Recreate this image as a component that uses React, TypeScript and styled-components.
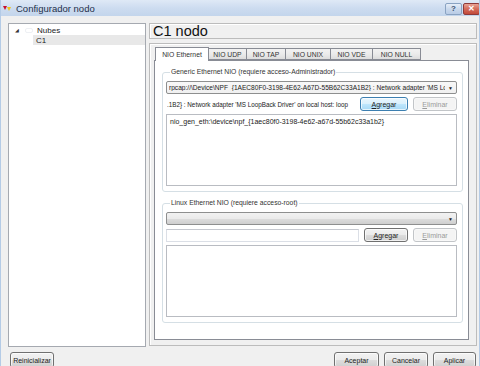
import React from 'react';
import styled, { createGlobalStyle } from 'styled-components';

const Global = createGlobalStyle`
  html, body { margin: 0; padding: 0; background: #f0f0f0; }
  body { font-family: "Liberation Sans", Arial, sans-serif; font-size: 7px; color: #1a1a1a; }
  * { box-sizing: border-box; }
`;

const Window = styled.div`
  width: 480px;
  height: 366px;
  overflow: hidden;
  display: flex;
  flex-direction: column;
  background: #f0f0f0;
  border-left: 1px solid #b4cbe6;
  border-right: 1px solid #b4cbe6;
`;

const TitleBar = styled.div`
  height: 16px;
  flex: none;
  display: flex;
  align-items: center;
  padding: 0 0 0 2px;
  background: linear-gradient(180deg, #dfe9f6 0%, #cddcf0 50%, #c3d5ec 100%);
`;

const TitleText = styled.span`
  margin-left: 5px;
  font-size: 9.5px;
  color: #1e2f4a;
  flex: 1;
`;

const CaptionGroup = styled.div`
  display: flex;
  gap: 1px;
  align-self: flex-start;
  margin-right: -1px;
`;

const CaptionButton = styled.div<{ $close?: boolean }>`
  width: 17px;
  height: 12px;
  margin-top: 3px;
  display: flex;
  align-items: center;
  justify-content: center;
  border: 1px solid ${p => (p.$close ? '#8d3a3a' : '#8aa3c2')};
  border-radius: 2px;
  background: ${p =>
    p.$close
      ? 'linear-gradient(180deg,#e8a293 0%,#d46a5a 50%,#c24a3a 100%)'
      : 'linear-gradient(180deg,#e6eef8 0%,#c9d8ec 50%,#b9cce6 100%)'};
  color: ${p => (p.$close ? '#fff' : '#3a5270')};
  font-size: 8px;
  font-weight: bold;
  line-height: 1;
`;

const Body = styled.div`
  flex: 1;
  display: flex;
  flex-direction: column;
  padding: 7px 2px 0 7px;
  min-width: 0;
`;

const MainRow = styled.div`
  display: flex;
  gap: 3px;
  height: 324px;
  flex: none;
  min-width: 0;
`;

const TreePanel = styled.div`
  width: 138px;
  flex: none;
  background: #fff;
  border: 1px solid #a5a9b0;
  padding-top: 1px;
`;

const TreeRow = styled.div<{ $indent: number; $selected?: boolean }>`
  height: 10px;
  display: flex;
  align-items: center;
  margin-left: ${p => p.$indent}px;
  background: ${p => (p.$selected ? '#e8e8e8' : 'transparent')};
  padding-left: ${p => (p.$selected ? 3 : 0)}px;
  font-size: 8px;
  color: #222;
`;

const Expander = styled.span`
  width: 10px;
  font-size: 5px;
  color: #333;
`;

const NodeIcon = styled.span`
  width: 8px;
  height: 5px;
  margin-right: 4px;
  border: 1px solid #eef0f4;
  border-radius: 2px;
`;

const RightCol = styled.div`
  flex: 1;
  min-width: 0;
  display: flex;
  flex-direction: column;
  gap: 4px;
`;

const HeaderBox = styled.div`
  height: 16px;
  border: 1px solid #bcbcbc;
  box-shadow: inset 1px 1px 0 #fff;
  padding-left: 3px;
  display: flex;
  align-items: center;
  font-size: 14.5px;
  color: #111;
`;

const OuterFrame = styled.div`
  height: 303px;
  min-width: 0;
  border: 1px solid #bcbcbc;
  box-shadow: inset 1px 1px 0 #fff;
  padding: 4px 7px 5px 4px;
  display: flex;
  flex-direction: column;
`;

const TabBar = styled.div`
  display: flex;
  height: 12px;
  padding-left: 1px;
  position: relative;
  z-index: 1;
  flex: none;
`;

const Tab = styled.div<{ $w: number; $active?: boolean }>`
  width: ${p => p.$w}px;
  height: ${p => (p.$active ? 14 : 12)}px;
  margin-top: ${p => (p.$active ? -1 : 0)}px;
  margin-left: -1px;
  border: 1px solid #898c95;
  border-bottom: ${p => (p.$active ? 'none' : '1px solid #898c95')};
  background: ${p =>
    p.$active ? '#fff' : 'linear-gradient(180deg,#f2f2f2 0%,#ebebeb 50%,#dddddd 100%)'};
  display: flex;
  align-items: center;
  justify-content: center;
  font-size: 6.8px;
  color: #333;
  &:first-child { margin-left: 0; }
`;

const TabPane = styled.div`
  flex: 1;
  min-width: 0;
  background: #fff;
  border: 1px solid #898c95;
  padding: 6px 5px 0 7px;
  display: flex;
  flex-direction: column;
  gap: 6px;
`;

const Group = styled.fieldset`
  margin: 0;
  min-width: 0;
  border: 1px solid #d5dfe5;
  border-radius: 3px;
  padding: 4px 5px 5px 3px;
  display: flex;
  flex-direction: column;
  gap: 3px;
`;

const Legend = styled.legend`
  padding: 0 1px;
  margin-left: 4px;
  font-size: 6.8px;
  line-height: 10px;
  color: #333;
`;

const Combo = styled.div<{ $light?: boolean }>`
  height: 13px;
  min-width: 0;
  border: 1px solid #8e8f8f;
  border-radius: 2px;
  background: ${p =>
    p.$light
      ? 'linear-gradient(180deg,#f8f8f8 0%,#f0f0f0 100%)'
      : 'linear-gradient(180deg,#f2f2f2 0%,#ebebeb 50%,#dddddd 51%,#cfcfcf 100%)'};
  display: flex;
  align-items: center;
  padding: 0 3px 0 2px;
  font-size: 6.6px;
  color: #222;
  overflow: hidden;
  white-space: nowrap;
`;

const ComboText = styled.span`
  flex: 1;
  width: 0;
  min-width: 0;
  overflow: hidden;
`;

const ComboArrow = styled.span`
  font-size: 5px;
  color: #222;
  margin-left: 3px;
`;

const Row = styled.div`
  display: flex;
  align-items: center;
  height: 14px;
  gap: 5px;
  min-width: 0;
`;

const TextField = styled.div<{ $bare?: boolean }>`
  flex: 1;
  width: 0;
  min-width: 0;
  height: 13px;
  border: 1px solid ${p => (p.$bare ? 'transparent' : '#dbdfe6')};
  border-top-color: ${p => (p.$bare ? 'transparent' : '#c5c8cf')};
  background: #fff;
  display: flex;
  align-items: center;
  padding: 0 2px 0 0;
  font-size: 6.3px;
  color: #222;
  overflow: hidden;
  white-space: nowrap;
`;

const Button = styled.div<{ $w: number; $variant?: 'default' | 'hot' | 'disabled'; $h?: number }>`
  width: ${p => p.$w}px;
  height: ${p => p.$h ?? 14}px;
  flex: none;
  border: 1px solid
    ${p => (p.$variant === 'hot' ? '#3c7fb1' : p.$variant === 'disabled' ? '#c2c5c8' : '#707070')};
  border-radius: 3px;
  background: ${p =>
    p.$variant === 'hot'
      ? 'linear-gradient(180deg,#eaf6fd 0%,#d9f0fc 50%,#bee6fd 51%,#a7d9f5 100%)'
      : p.$variant === 'disabled'
      ? '#f4f4f4'
      : 'linear-gradient(180deg,#f2f2f2 0%,#ebebeb 50%,#dddddd 51%,#cfcfcf 100%)'};
  box-shadow: inset 0 0 0 1px ${p => (p.$variant === 'disabled' ? '#f8f8f8' : 'rgba(255,255,255,0.7)')};
  display: flex;
  align-items: center;
  justify-content: center;
  font-size: 7px;
  color: ${p => (p.$variant === 'disabled' ? '#9a9a9a' : '#222')};
  & u { text-decoration: underline; }
`;

const ListBox = styled.div`
  height: 72px;
  min-width: 0;
  border: 1px solid #b9bcc2;
  background: #fff;
  padding: 3px 3px;
  font-size: 7px;
  color: #222;
  white-space: nowrap;
  overflow: hidden;
`;

const BottomRow = styled.div`
  display: flex;
  align-items: flex-start;
  margin-top: 5px;
  padding-left: 2px;
  padding-right: 1px;
`;

const Spacer = styled.div`
  flex: 1;
`;

const ButtonGroup = styled.div`
  display: flex;
  gap: 5px;
`;

const WinIcon = () => (
  <svg width="8" height="7" viewBox="0 0 8 7">
    <path d="M0 1 L4 1 L2 5 Z" fill="#c8102e" />
    <path d="M4 2 L8 2 L6 6 Z" fill="#f0c419" />
  </svg>
);

const tabs: { label: string; w: number }[] = [
  { label: 'NIO Ethernet', w: 54 },
  { label: 'NIO UDP', w: 39 },
  { label: 'NIO TAP', w: 40 },
  { label: 'NIO UNIX', w: 46 },
  { label: 'NIO VDE', w: 43 },
  { label: 'NIO NULL', w: 49 },
];

export default function App() {
  return (
    <>
      <Global />
      <Window>
        <TitleBar>
          <WinIcon />
          <TitleText>Configurador nodo</TitleText>
          <CaptionGroup>
            <CaptionButton>?</CaptionButton>
            <CaptionButton $close>✕</CaptionButton>
          </CaptionGroup>
        </TitleBar>
        <Body>
          <MainRow>
            <TreePanel>
              <TreeRow $indent={6}>
                <Expander>◢</Expander>
                <NodeIcon />
                Nubes
              </TreeRow>
              <TreeRow $indent={24} $selected>
                C1
              </TreeRow>
            </TreePanel>
            <RightCol>
              <HeaderBox>C1 nodo</HeaderBox>
              <OuterFrame>
                <TabBar>
                  {tabs.map((t, i) => (
                    <Tab key={t.label} $w={t.w} $active={i === 0}>
                      {t.label}
                    </Tab>
                  ))}
                </TabBar>
                <TabPane>
                  <Group>
                    <Legend>Generic Ethernet NIO (requiere acceso-Administrador)</Legend>
                    <Combo $light>
                      <ComboText>
                        rpcap://\Device\NPF_{'{'}1AEC80F0-3198-4E62-A67D-55B62C33A1B2{'}'} : Network adapter 'MS Lo
                      </ComboText>
                      <ComboArrow>▼</ComboArrow>
                    </Combo>
                    <Row>
                      <TextField $bare>
                        .1B2{'}'} : Network adapter 'MS LoopBack Driver' on local host: loop
                      </TextField>
                      <Button $w={48} $variant="hot">
                        <span>
                          <u>A</u>gregar
                        </span>
                      </Button>
                      <Button $w={44} $variant="disabled">
                        <span>
                          <u>E</u>liminar
                        </span>
                      </Button>
                    </Row>
                    <ListBox>nio_gen_eth:\device\npf_{'{'}1aec80f0-3198-4e62-a67d-55b62c33a1b2{'}'}</ListBox>
                  </Group>
                  <Group>
                    <Legend>Linux Ethernet NIO (requiere acceso-root)</Legend>
                    <Combo>
                      <ComboText />
                      <ComboArrow>▼</ComboArrow>
                    </Combo>
                    <Row>
                      <TextField />
                      <Button $w={44}>
                        <span>
                          <u>A</u>gregar
                        </span>
                      </Button>
                      <Button $w={44} $variant="disabled">
                        <span>
                          <u>E</u>liminar
                        </span>
                      </Button>
                    </Row>
                    <ListBox />
                  </Group>
                </TabPane>
              </OuterFrame>
            </RightCol>
          </MainRow>
          <BottomRow>
            <Button $w={44} $h={16}>Reinicializar</Button>
            <Spacer />
            <ButtonGroup>
              <Button $w={45} $h={16}>Aceptar</Button>
              <Button $w={44} $h={16}>Cancelar</Button>
              <Button $w={43} $h={16}>Aplicar</Button>
            </ButtonGroup>
          </BottomRow>
        </Body>
      </Window>
    </>
  );
}
